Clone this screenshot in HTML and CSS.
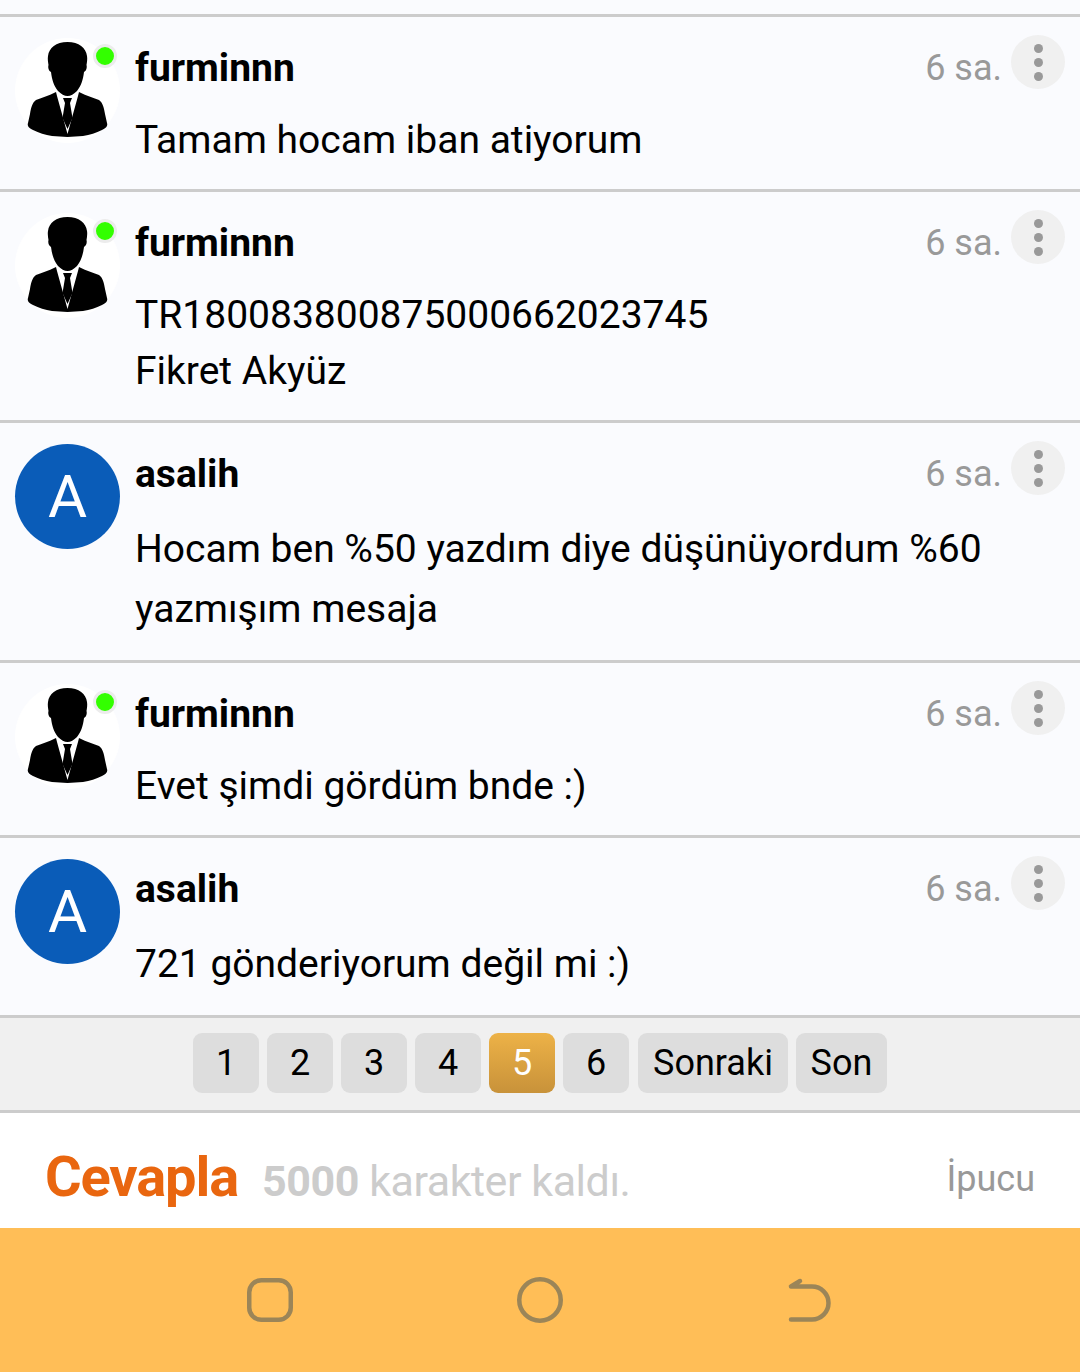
FILE: index.html
```html
<!DOCTYPE html>
<html lang="tr">
<head>
<meta charset="utf-8">
<title>Mesajlar</title>
<link rel="stylesheet" href="styles.css">
</head>
<body>
<svg class="defs" width="0" height="0" aria-hidden="true">
  <symbol id="person" viewBox="0 0 105 105">
    <path d="M52.500 4C41 4 34 10 33 18c-.5 3 0 6 .5 9-.8 3 .5 6 2.500 7 1 8 3 14 7 19 3 3 6.500 5 9.500 5s6.500-2 9.500-5c4-5 6-11 7-19 2-1 3.300-4 2.500-7 .5-3 1-6 .5-9C71 10 64 4 52.500 4z"/>
    <path d="M41 54C33 58 26 60 21 62c-4 3-5 8-6 14l-2 9c-1 3 1 5 5 7 6 3 12 5 19 6l15.500 1 15.500-1c7-1 13-3 19-6 4-2 6-4 5-7l-2-9c-1-6-2-11-6-14C79 60 72 58 64 54l-1 4-10.500 38L42 58z"/>
    <path d="M48 60h9l-2 5 2.500 15L52.500 91 47.500 80 50 65z"/>
  </symbol>
</svg>

<main class="thread">
  <article class="post">
    <div class="avatar photo"><svg class="person"><use href="#person"/></svg><span class="online"></span></div>
    <div class="body">
      <header class="head"><strong class="name">furminnn</strong><time class="time">6 sa.</time><span class="menu"><i></i><i></i><i></i></span></header>
      <p class="msg tight">Tamam hocam iban atiyorum</p>
    </div>
  </article>
  <article class="post">
    <div class="avatar photo"><svg class="person"><use href="#person"/></svg><span class="online"></span></div>
    <div class="body">
      <header class="head"><strong class="name">furminnn</strong><time class="time">6 sa.</time><span class="menu"><i></i><i></i><i></i></span></header>
      <p class="msg normal">TR180083800875000662023745<br>Fikret Akyüz</p>
    </div>
  </article>
  <article class="post">
    <div class="avatar letter">A</div>
    <div class="body">
      <header class="head"><strong class="name">asalih</strong><time class="time">6 sa.</time><span class="menu"><i></i><i></i><i></i></span></header>
      <p class="msg wide">Hocam ben %50 yazdım diye düşünüyordum %60 yazmışım mesaja</p>
    </div>
  </article>
  <article class="post">
    <div class="avatar photo"><svg class="person"><use href="#person"/></svg><span class="online"></span></div>
    <div class="body">
      <header class="head"><strong class="name">furminnn</strong><time class="time">6 sa.</time><span class="menu"><i></i><i></i><i></i></span></header>
      <p class="msg tight">Evet şimdi gördüm bnde :)</p>
    </div>
  </article>
  <article class="post">
    <div class="avatar letter">A</div>
    <div class="body">
      <header class="head"><strong class="name">asalih</strong><time class="time">6 sa.</time><span class="menu"><i></i><i></i><i></i></span></header>
      <p class="msg wide">721 gönderiyorum değil mi :)</p>
    </div>
  </article>
</main>

<nav class="pager">
  <a class="page num">1</a>
  <a class="page num">2</a>
  <a class="page num">3</a>
  <a class="page num">4</a>
  <a class="page num current">5</a>
  <a class="page num">6</a>
  <a class="page next">Sonraki</a>
  <a class="page last">Son</a>
</nav>

<section class="reply">
  <h2 class="reply-title">Cevapla</h2>
  <span class="remaining"><b>5000</b> karakter kaldı.</span>
  <span class="hint">İpucu</span>
</section>

<footer class="sysnav">
  <svg class="navicon" viewBox="0 0 50 50"><rect x="4.250" y="5.250" width="41.500" height="39.500" rx="12" ry="12"/></svg>
  <svg class="navicon" viewBox="0 0 50 50"><circle cx="25" cy="25" r="20.750"/></svg>
  <svg class="navicon" viewBox="0 0 50 50"><path d="M15 6 6 11.500H27A16.500 16.500 0 0 1 27 44.500H6"/></svg>
</footer>
</body>
</html>
```

FILE: styles.css
```css
* { box-sizing: border-box; }
html, body { margin: 0; padding: 0; }
body {
  width: 1080px;
  height: 1372px;
  overflow: hidden;
  display: flex;
  flex-direction: column;
  background: #fafbfe;
  font-family: Roboto, "Noto Sans", sans-serif;
  color: #000;
}
.defs { position: absolute; }
.thread { padding-top: 14px; }
.post {
  display: flex;
  gap: 15px;
  padding: 21px 15px;
  border-top: 3px solid #cccccc;
}
.avatar {
  position: relative;
  flex: none;
  width: 105px;
  height: 105px;
  border-radius: 50%;
}
.photo { background: #fff; }
.person { display: block; width: 105px; height: 105px; fill: #000; }
.letter {
  background: #0a5cb8;
  color: #fff;
  font-size: 60px;
  line-height: 105px;
  text-align: center;
}
.online {
  position: absolute;
  top: 6px;
  right: 3px;
  width: 24px;
  height: 24px;
  border-radius: 50%;
  border: 3px solid #ececec;
  background: #33ff00;
}
.body { flex: 1; min-width: 0; }
.head {
  display: flex;
  align-items: center;
  height: 58px;
  margin-bottom: 17px;
}
.name { flex: 1; margin-top: 2px; font-size: 39px; font-weight: 700; line-height: 58px; }
.time { margin-top: 2px; font-size: 36px; color: #999; line-height: 58px; }
.menu {
  display: flex;
  flex: none;
  flex-direction: column;
  align-items: center;
  justify-content: center;
  gap: 5px;
  width: 54px;
  height: 54px;
  margin: -10px 0 0 9px;
  border-radius: 50%;
  background: #f0f0f0;
}
.menu i { width: 9px; height: 9px; border-radius: 50%; background: #999; }
.msg { margin: 0; font-size: 39px; }
.tight { line-height: 55px; }
.normal { line-height: 55.500px; }
.wide { line-height: 60px; }
.pager {
  display: flex;
  justify-content: center;
  gap: 8px;
  height: 98px;
  padding: 15px 0;
  border-top: 3px solid #cccccc;
  border-bottom: 3px solid #cccccc;
  background: #f0f0f0;
}
.page {
  height: 60px;
  border-radius: 9px;
  background: #dddddd;
  font-size: 36px;
  line-height: 60px;
  text-align: center;
}
.num { width: 66px; }
.next { width: 150px; margin-left: 1px; }
.last { width: 91px; }
.current { background: linear-gradient(#edb247, #c8923a); color: #fff; }
.reply {
  display: flex;
  align-items: baseline;
  height: 115px;
  padding: 34px 45px 0;
  background: #fff;
}
.reply-title { margin: 0; font-size: 56px; font-weight: 700; letter-spacing: -1.100px; color: #e9660f; line-height: 60px; }
.remaining { flex: 1; margin-left: 24px; font-size: 43px; letter-spacing: -0.450px; color: #cccccc; }
.hint { align-self: flex-start; margin-top: 2px; font-size: 36px; line-height: 60px; color: #999; }
.sysnav {
  flex: 1;
  display: flex;
  justify-content: center;
  align-items: center;
  gap: 220px;
  background: #ffbe57;
}
.navicon {
  width: 50px;
  height: 50px;
  fill: none;
  stroke: #9b8558;
  stroke-width: 4.500;
  stroke-linecap: round;
  stroke-linejoin: round;
}
```
